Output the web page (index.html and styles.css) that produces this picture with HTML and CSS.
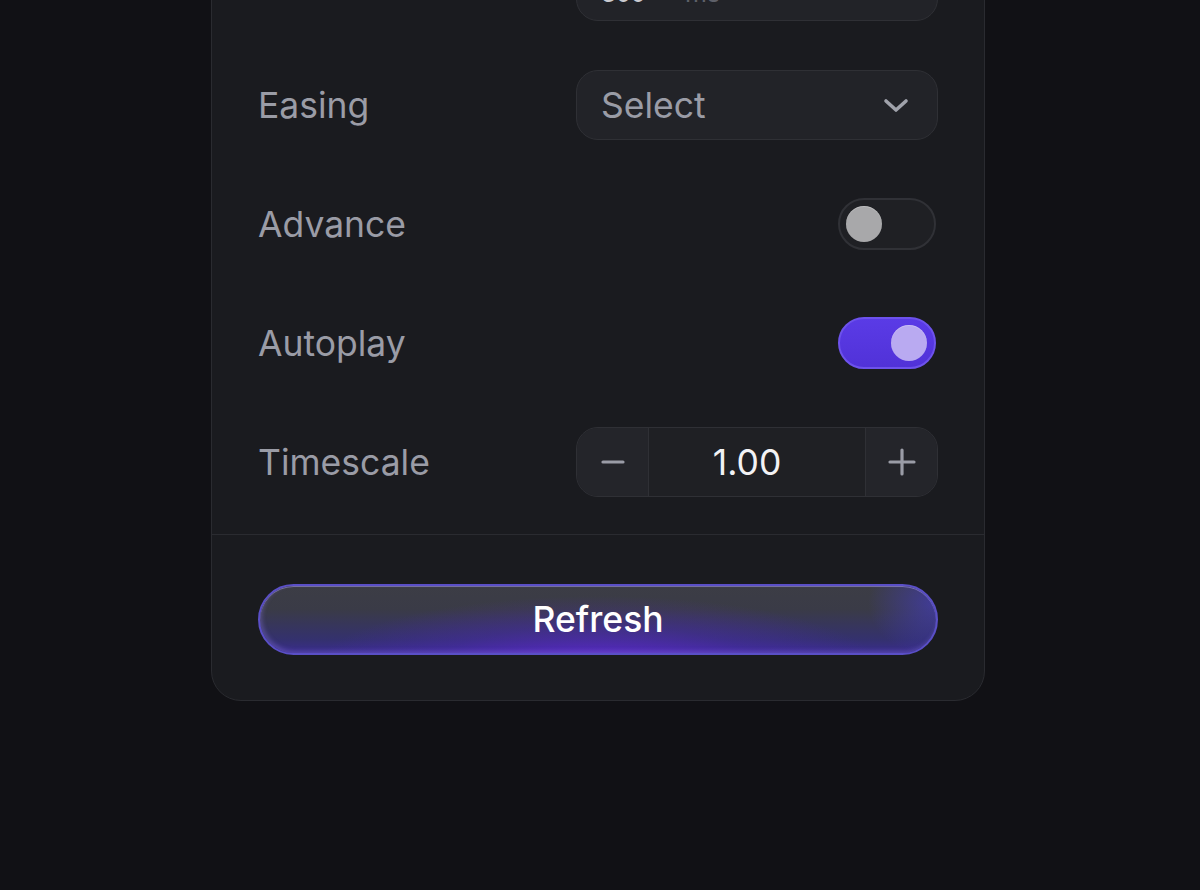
FILE: index.html
```html
<!DOCTYPE html>
<html lang="en">
<head>
<meta charset="utf-8">
<title>Settings</title>
<link rel="stylesheet" href="styles.css">
</head>
<body>
<main class="card">
  <section class="rows">
    <div class="row">
      <span class="label">Duration</span>
      <div class="field value-field"><span class="value">300</span><span class="unit">ms</span></div>
    </div>
    <div class="row">
      <span class="label">Easing</span>
      <div class="field select">
        <span class="placeholder">Select</span>
        <svg class="chev" width="26" height="16" viewBox="0 0 26 16"><path d="M3 3l10 9 10-9" fill="none" stroke="currentColor" stroke-width="3.6" stroke-linecap="round" stroke-linejoin="round"/></svg>
      </div>
    </div>
    <div class="row">
      <span class="label">Advance</span>
      <div class="toggle off"><span class="knob"></span></div>
    </div>
    <div class="row">
      <span class="label">Autoplay</span>
      <div class="toggle on"><span class="knob"></span></div>
    </div>
    <div class="row">
      <span class="label">Timescale</span>
      <div class="stepper">
        <span class="step">
          <svg width="26" height="26" viewBox="0 0 26 26"><path d="M3 13h20" stroke="currentColor" stroke-width="3.2" stroke-linecap="round"/></svg>
        </span>
        <span class="step-value">1.00</span>
        <span class="step">
          <svg width="28" height="28" viewBox="0 0 28 28"><path d="M2 14h24M14 2v24" stroke="currentColor" stroke-width="3.2" stroke-linecap="round"/></svg>
        </span>
      </div>
    </div>
  </section>
  <footer class="footer">
    <button class="refresh">Refresh</button>
  </footer>
</main>
</body>
</html>
```

FILE: styles.css
```css
* { box-sizing: border-box; }
html, body { margin: 0; height: 100%; }
body {
  background: #111115;
  font-family: Inter, "Noto Sans", sans-serif;
  overflow: hidden;
  padding-right: 4px;
}
.card {
  width: 774px;
  margin: -50px auto 0;
  background: #1a1b1f;
  border: 1px solid #2a2b30;
  border-radius: 30px;
}
.rows {
  display: flex;
  flex-direction: column;
  gap: 49px;
  padding: 0 46px 37px;
}
.row {
  height: 70px;
  display: flex;
  align-items: center;
  justify-content: space-between;
}
.label {
  color: #9a9ca6;
  font-size: 35.5px;
}
.field {
  width: 362px;
  height: 70px;
  background: #222328;
  border: 1px solid #2f3035;
  border-radius: 22px;
  display: flex;
  align-items: center;
  padding: 0 24px;
  gap: 12px;
  font-size: 35.5px;
}
.value-field {
  align-items: flex-end;
  padding-bottom: 12px;
  font-size: 25px;
}
.value { color: #c9cad0; letter-spacing: -1px; }
.unit { color: #5e6069; margin-left: 28px; }
.select { justify-content: space-between; }
.placeholder { color: #9a9ca6; }
.chev { color: #a0a2ab; margin-right: 4px; margin-top: 2px; }
.toggle {
  width: 98px;
  height: 52px;
  margin-right: 2px;
  border-radius: 26px;
  border: 2px solid #303136;
  background: #1f2024;
  display: flex;
  align-items: center;
  padding: 0 6px;
}
.toggle .knob {
  width: 36px;
  height: 36px;
  border-radius: 50%;
  background: #a8a8aa;
  box-shadow: inset 0 1px 0 rgba(255,255,255,.25);
}
.toggle.on {
  justify-content: flex-end;
  background: linear-gradient(180deg, #5a3be6 0%, #5132d8 100%);
  border-color: #6d52ec;
  padding-right: 7px;
}
.toggle.on .knob {
  background: #b9aaf1;
}
.stepper {
  width: 362px;
  height: 70px;
  background: #222328;
  border: 1px solid #2f3035;
  border-radius: 22px;
  display: flex;
  align-items: stretch;
  overflow: hidden;
}
.step {
  width: 72px;
  display: flex;
  align-items: center;
  justify-content: center;
  color: #9a9ca6;
  background: #24252a;
}
.step:first-child { border-right: 1px solid #2f3035; }
.step:last-child { border-left: 1px solid #2f3035; }
.step-value {
  flex: 1;
  display: flex;
  align-items: center;
  justify-content: center;
  padding-right: 20px;
  color: #f2f2f4;
  font-size: 35.5px;
  background: #1f2024;
}
.footer {
  border-top: 1px solid #2a2b30;
  padding: 49px 46px 45px;
}
.refresh {
  display: block;
  width: 100%;
  height: 71px;
  border-radius: 36px;
  border: 2px solid #5a4fc6;
  padding-left: 6px;
  font-family: inherit;
  font-size: 35.5px;
  font-weight: 500;
  color: #ffffff;
  background:
    radial-gradient(ellipse 42% 110% at 50% 125%, rgba(100, 40, 215, 0.85), rgba(80, 40, 190, 0.35) 60%, rgba(60, 40, 160, 0) 100%),
    radial-gradient(ellipse 10% 80% at 100% 25%, rgba(70, 60, 220, 0.55), rgba(70, 60, 220, 0) 100%),
    linear-gradient(180deg, #3c3d45 0%, #3a3b47 35%, #34316e 80%, #3a2c8e 100%);
  box-shadow: inset 0 1px 0 rgba(170, 160, 240, 0.5), inset 2px -2px 4px rgba(140, 120, 230, 0.35);
}
```
